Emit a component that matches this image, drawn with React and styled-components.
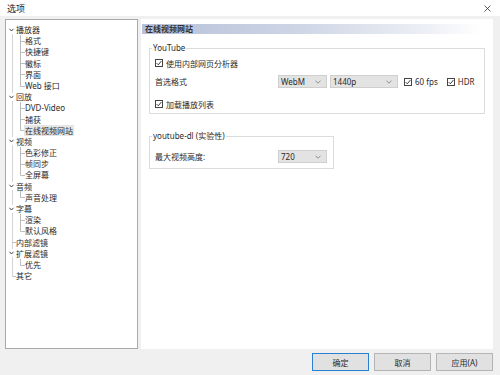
import React from "react";
import styled, { createGlobalStyle } from "styled-components";

const GlobalStyle = createGlobalStyle`
  html, body {
    margin: 0;
    padding: 0;
  }
  body {
    width: 500px;
    height: 375px;
    overflow: hidden;
    background: #f0f0f0;
    font-family: "Noto Sans", "Noto Sans CJK SC", sans-serif;
    font-size: 8px;
    color: #2a2a2a;
  }
`;

const Window = styled.div`
  display: flex;
  flex-direction: column;
  width: 500px;
  height: 375px;
`;

const TitleBar = styled.div`
  height: 16px;
  background: #fff;
  display: flex;
  align-items: center;
  justify-content: space-between;
  padding: 0 9px 0 7px;
  font-size: 9px;
  color: #222;
`;

const Body = styled.div`
  display: grid;
  grid-template-columns: 133px 352px;
  column-gap: 3px;
  padding: 3px 7px 0 5px;
`;

const TreePanel = styled.div`
  height: 330px;
  box-sizing: border-box;
  background: #fff;
  border: 1px solid #a9a9a9;
  padding-top: 4px;
  display: flex;
  flex-direction: column;
`;

const TreeRow = styled.div`
  display: flex;
  align-items: center;
  height: 11.2px;
  line-height: 11.2px;
  white-space: nowrap;
`;

const TreeLabel = styled.span`
  padding: 0 1px;
  margin-left: -1px;
  background: ${(p) => (p.$selected ? "#e6e6e6" : "transparent")};
  color: #2a2a2a;
`;

const Page = styled.div`
  height: 330px;
  background: #fff;
  display: flex;
  flex-direction: column;
  align-items: flex-start;
`;

const PageHeader = styled.div`
  align-self: stretch;
  margin: 5px 12px 0 1px;
  height: 10px;
  line-height: 10px;
  padding-left: 3px;
  font-weight: 700;
  color: #333;
  background: linear-gradient(to right, #b6c1d9 0%, #cdd5e5 45%, #eef0f5 85%, #fff 100%);
`;

const Group = styled.fieldset`
  box-sizing: border-box;
  width: ${(p) => p.$width}px;
  margin: ${(p) => p.$mt}px 0 0 8px;
  padding: ${(p) => p.$pt}px 6px ${(p) => p.$pb}px 5px;
  border: 1px solid #dcdcdc;
  min-width: 0;
`;

const Legend = styled.legend`
  margin-left: -3px;
  padding: 0 1px;
  height: 10px;
  line-height: 10px;
  font-size: 8px;
  color: #2a2a2a;
`;

const Row = styled.div`
  display: flex;
  align-items: center;
  height: ${(p) => p.$h || 12}px;
  margin-top: ${(p) => p.$mt || 0}px;
`;

const FieldLabel = styled.span`
  width: 123px;
  flex: none;
`;

const CheckWrap = styled.label`
  display: flex;
  align-items: center;
  gap: 3px;
  margin-left: ${(p) => p.$ml || 0}px;
  white-space: nowrap;
`;

const Box = styled.span`
  width: 8px;
  height: 8px;
  box-sizing: border-box;
  border: 1px solid #444;
  background: #fff;
  display: flex;
  align-items: center;
  justify-content: center;
`;

const SelectBox = styled.div`
  box-sizing: border-box;
  width: ${(p) => p.$w}px;
  height: 13px;
  margin-left: ${(p) => p.$ml || 0}px;
  background: #e3e3e3;
  border: 1px solid #cfcfcf;
  display: flex;
  align-items: center;
  justify-content: space-between;
  padding: 0 5px 0 2px;
  color: #2a2a2a;
`;

const Footer = styled.div`
  display: flex;
  justify-content: flex-end;
  gap: 5px;
  padding: 4px 7px 0 0;
`;

const Button = styled.div`
  box-sizing: border-box;
  width: 57px;
  height: 18px;
  display: flex;
  align-items: center;
  justify-content: center;
  background: #e1e1e1;
  border: 1px solid ${(p) => (p.$default ? "#2b7fd0" : "#b4b4b4")};
  color: #2a2a2a;
`;

const LINE = "#bdbdbd";
const ROOT_LINE = "#d4d4d4";

const tree = [
  { label: "播放器", children: ["格式", "快捷键", "徽标", "界面", "Web 接口"] },
  { label: "回放", children: ["DVD-Video", "捕获", "在线视频网站"] },
  { label: "视频", children: ["色彩修正", "帧同步", "全屏幕"] },
  { label: "音频", children: ["声音处理"] },
  { label: "字幕", children: ["渲染", "默认风格"] },
  { label: "内部滤镜" },
  { label: "扩展滤镜", children: ["优先"] },
  { label: "其它" },
];

function RootGuide({ first, last, expanded }) {
  return (
    <svg width="10" height="12" style={{ flex: "none" }}>
      <line x1="6.5" x2="6.5" y1={first ? 6 : 0} y2={last ? 6 : 12} stroke={ROOT_LINE} />
      {expanded ? (
        <>
          <rect x="2" y="2" width="8" height="8" fill="#fff" />
          <polyline points="3.5,4.8 5.5,7 7.5,4.8" fill="none" stroke="#444" strokeWidth="1" />
        </>
      ) : (
        <line x1="6.5" x2="10" y1="6.5" y2="6.5" stroke={LINE} />
      )}
    </svg>
  );
}

function ChildGuide({ lastChild }) {
  return (
    <svg width="19" height="12" style={{ flex: "none" }}>
      <line x1="6.5" x2="6.5" y1="0" y2="12" stroke={ROOT_LINE} />
      <line x1="14.5" x2="14.5" y1="0" y2={lastChild ? 6.5 : 12} stroke={LINE} />
      <line x1="14.5" x2="19" y1="6.5" y2="6.5" stroke={LINE} />
    </svg>
  );
}

function Tree() {
  const rows = [];
  tree.forEach((node, i) => {
    rows.push(
      <TreeRow key={node.label}>
        <RootGuide first={i === 0} last={i === tree.length - 1} expanded={!!node.children} />
        <TreeLabel>{node.label}</TreeLabel>
      </TreeRow>
    );
    (node.children || []).forEach((c, j) => {
      rows.push(
        <TreeRow key={node.label + c}>
          <ChildGuide lastChild={j === node.children.length - 1} />
          <TreeLabel $selected={c === "在线视频网站"}>{c}</TreeLabel>
        </TreeRow>
      );
    });
  });
  return <TreePanel>{rows}</TreePanel>;
}

function Check({ children, ml }) {
  return (
    <CheckWrap $ml={ml}>
      <Box>
        <svg width="6" height="6" viewBox="0 0 6 6">
          <polyline points="0.6,3.1 2.3,4.8 5.4,1" fill="none" stroke="#2a2a2a" strokeWidth="0.9" />
        </svg>
      </Box>
      {children}
    </CheckWrap>
  );
}

function Chevron() {
  return (
    <svg width="6" height="4" viewBox="0 0 6 4">
      <polyline points="0.5,0.8 3,3.2 5.5,0.8" fill="none" stroke="#777" strokeWidth="0.8" />
    </svg>
  );
}

function Select({ value, w, ml }) {
  return (
    <SelectBox $w={w} $ml={ml}>
      <span>{value}</span>
      <Chevron />
    </SelectBox>
  );
}

export default function App() {
  return (
    <Window>
      <GlobalStyle />
      <TitleBar>
        <span>选项</span>
        <svg width="7" height="7" viewBox="0 0 7 7">
          <path d="M0.5 0.5 L6.5 6.5 M6.5 0.5 L0.5 6.5" stroke="#333" strokeWidth="0.8" />
        </svg>
      </TitleBar>
      <Body>
        <Tree />
        <Page>
          <PageHeader>在线视频网站</PageHeader>
          <Group $width={336} $mt={9} $pt={4} $pb={3}>
            <Legend>YouTube</Legend>
            <Row>
              <Check>使用内部网页分析器</Check>
            </Row>
            <Row $h={13} $mt={6}>
              <FieldLabel>首选格式</FieldLabel>
              <Select value="WebM" w={49} />
              <Select value="1440p" w={68} ml={3} />
              <Check ml={6}>60 fps</Check>
              <Check ml={9}>HDR</Check>
            </Row>
            <Row $mt={10}>
              <Check>加载播放列表</Check>
            </Row>
          </Group>
          <Group $width={185} $mt={17} $pt={9} $pb={5}>
            <Legend>youtube-dl (实验性)</Legend>
            <Row $h={13}>
              <FieldLabel>最大视频高度:</FieldLabel>
              <Select value="720" w={51} />
            </Row>
          </Group>
        </Page>
      </Body>
      <Footer>
        <Button $default>确定</Button>
        <Button>取消</Button>
        <Button>应用(A)</Button>
      </Footer>
    </Window>
  );
}
